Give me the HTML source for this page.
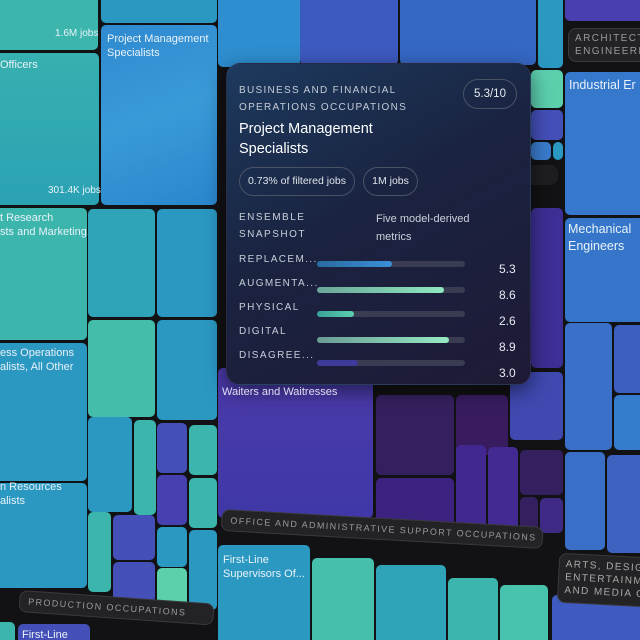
<!DOCTYPE html>
<html><head><meta charset="utf-8"><style>
*{margin:0;padding:0;box-sizing:border-box}
html{width:640px;height:640px;overflow:hidden}
body{width:640px;height:640px;overflow:hidden;background:#121214;font-family:"Liberation Sans",sans-serif;position:relative}
.r{position:absolute;border-radius:5px}
.t{position:absolute;color:#e8f2f8;font-size:11px;line-height:14px;white-space:nowrap}
.tc{background:#3cb6ad}.cy{background:#2b98c2}.bl{background:#3a7ccc}.in{background:#4450b8}.pu{background:#3f2a86}.dp{background:#35205f}.gr{background:#5ccfad}
.pill{position:absolute;border-radius:8px;background:#232325;border:1px solid #3a3a3c;color:#9a9a9e;font-size:9px;letter-spacing:1.4px;padding:4px 8px;line-height:12px;white-space:nowrap;overflow:hidden}
</style></head><body>
<!-- left column -->
<div class="r tc" style="left:-5px;top:-5px;width:103px;height:55px"></div>
<div class="t" style="left:55px;top:27px;font-size:10px">1.6M jobs</div>
<div class="r" style="left:-5px;top:53px;width:104px;height:152px;background:linear-gradient(#36b0b0,#2aa2b4)"></div>
<div class="t" style="left:0;top:58px">Officers</div>
<div class="t" style="left:48px;top:184px;font-size:10px">301.4K jobs</div>
<div class="r tc" style="left:-5px;top:208px;width:92px;height:132px"></div>
<div class="t" style="left:0;top:211px">t Research<br>sts and Marketing...</div>
<div class="r cy" style="left:-5px;top:343px;width:92px;height:138px"></div>
<div class="t" style="left:0;top:346px">ess Operations<br>alists, All Other</div>
<div class="r cy" style="left:-5px;top:483px;width:92px;height:105px"></div>
<div class="t" style="left:0;top:480px">n Resources<br>alists</div>
<div class="r tc" style="left:-5px;top:622px;width:20px;height:30px"></div>
<div class="r in" style="left:18px;top:624px;width:72px;height:30px"></div>
<div class="t" style="left:22px;top:628px">First-Line</div>
<!-- column 2 -->
<div class="r cy" style="left:101px;top:-5px;width:116px;height:28px"></div>
<div class="r" style="left:101px;top:25px;width:116px;height:180px;background:linear-gradient(160deg,#2f8ad0,#3a9ad8 50%,#2a86cc)"></div>
<div class="t" style="left:107px;top:32px">Project Management<br>Specialists</div>
<div class="r cy" style="left:88px;top:209px;width:67px;height:108px;background:#2fa3b8"></div>
<div class="r cy" style="left:157px;top:209px;width:60px;height:108px"></div>
<div class="r tc" style="left:88px;top:320px;width:67px;height:97px;background:#44bdab"></div>
<div class="r cy" style="left:157px;top:320px;width:60px;height:100px"></div>
<div class="r cy" style="left:88px;top:417px;width:44px;height:95px"></div>
<div class="r tc" style="left:134px;top:420px;width:22px;height:95px"></div>
<div class="r in" style="left:157px;top:423px;width:30px;height:50px"></div>
<div class="r tc" style="left:189px;top:425px;width:28px;height:50px"></div>
<div class="r pu" style="left:157px;top:475px;width:30px;height:50px;background:#4640b0"></div>
<div class="r tc" style="left:189px;top:478px;width:28px;height:50px"></div>
<div class="r tc" style="left:88px;top:512px;width:23px;height:80px"></div>
<div class="r in" style="left:113px;top:515px;width:42px;height:45px"></div>
<div class="r in" style="left:113px;top:562px;width:42px;height:40px"></div>
<div class="r cy" style="left:157px;top:527px;width:30px;height:40px"></div>
<div class="r gr" style="left:157px;top:568px;width:30px;height:40px"></div>
<div class="r cy" style="left:189px;top:530px;width:28px;height:80px"></div>
<div class="pill" style="left:20px;top:590px;width:195px;height:22px;transform:rotate(4deg);transform-origin:left top">PRODUCTION OCCUPATIONS</div>
<!-- middle column -->
<div class="r cy" style="left:218px;top:-5px;width:82px;height:72px;background:#2e8ed0"></div>
<div class="r in" style="left:300px;top:-5px;width:98px;height:70px;background:#3d5ac0"></div>
<div class="r bl" style="left:400px;top:-5px;width:136px;height:70px;background:#3568c4"></div>
<div class="r cy" style="left:538px;top:-5px;width:25px;height:73px"></div>
<div class="r gr" style="left:531px;top:70px;width:32px;height:38px"></div>
<div class="r in" style="left:531px;top:110px;width:32px;height:30px"></div>
<div class="r bl" style="left:531px;top:142px;width:20px;height:18px"></div>
<div class="r cy" style="left:553px;top:142px;width:10px;height:18px"></div>
<div class="r" style="left:500px;top:165px;width:58px;height:20px;background:#1e1e20;border-radius:8px"></div>
<div class="r pu" style="left:531px;top:208px;width:32px;height:160px;background:#3d2f95"></div>
<div class="r in" style="left:510px;top:372px;width:53px;height:68px;background:#3f49b0"></div>
<div class="r" style="left:218px;top:368px;width:155px;height:150px;background:linear-gradient(#4a3aa8,#4038a8)"></div>
<div class="r dp" style="left:376px;top:395px;width:78px;height:80px"></div>
<div class="r dp" style="left:456px;top:395px;width:52px;height:60px;background:#391c60"></div>
<div class="r pu" style="left:376px;top:478px;width:78px;height:55px;background:#3c2380"></div>
<div class="r pu" style="left:456px;top:445px;width:30px;height:95px;background:#412890"></div>
<div class="r pu" style="left:488px;top:447px;width:30px;height:95px;background:#432a92"></div>
<div class="r dp" style="left:520px;top:450px;width:43px;height:45px"></div>
<div class="r dp" style="left:520px;top:497px;width:18px;height:45px"></div>
<div class="r pu" style="left:540px;top:498px;width:23px;height:35px"></div>
<div class="r cy" style="left:218px;top:545px;width:92px;height:100px"></div>
<div class="t" style="left:223px;top:553px">First-Line<br>Supervisors Of...</div>
<div class="r tc" style="left:312px;top:558px;width:62px;height:90px;background:#46c0ad"></div>
<div class="r cy" style="left:376px;top:565px;width:70px;height:80px;background:#2fa3b8"></div>
<div class="r tc" style="left:448px;top:578px;width:50px;height:70px"></div>
<div class="r tc" style="left:500px;top:585px;width:48px;height:60px;background:#48c4ae"></div>
<div class="r in" style="left:552px;top:595px;width:90px;height:50px;background:#3f5ac0"></div>
<div class="pill" style="left:222px;top:509px;width:322px;height:22px;transform:rotate(3.2deg);transform-origin:left top">OFFICE AND ADMINISTRATIVE SUPPORT OCCUPATIONS</div>
<!-- right column -->
<div class="r in" style="left:565px;top:-5px;width:80px;height:26px;background:#4a3fb0"></div>
<div class="pill" style="left:568px;top:28px;width:80px;height:34px;font-size:10px;line-height:13px;padding:3px 6px">ARCHITECT<br>ENGINEERI</div>
<div class="r bl" style="left:565px;top:72px;width:80px;height:143px;background:#3578cc"></div>
<div class="t" style="left:569px;top:78px;font-size:12.5px">Industrial Er</div>
<div class="r bl" style="left:565px;top:218px;width:80px;height:104px;background:#3576ca"></div>
<div class="t" style="left:568px;top:221px;font-size:12.5px;line-height:17px">Mechanical<br>Engineers</div>
<div class="r bl" style="left:565px;top:323px;width:47px;height:127px;background:#3a70c8"></div>
<div class="r in" style="left:614px;top:325px;width:30px;height:68px;background:#3d60c0"></div>
<div class="r bl" style="left:614px;top:395px;width:30px;height:55px;background:#357dcc"></div>
<div class="r bl" style="left:565px;top:452px;width:40px;height:98px;background:#3a6fc8"></div>
<div class="r in" style="left:607px;top:455px;width:38px;height:98px;background:#3d62c0"></div>
<div class="pill" style="left:558px;top:555px;width:90px;height:50px;font-size:10px;line-height:13px;padding:4px 6px;color:#aaa;transform:rotate(3deg)">ARTS, DESIG<br>ENTERTAINM<br>AND MEDIA O</div>
<!-- tooltip -->
<div style="position:absolute;left:226px;top:63px;width:305px;height:322px;border-radius:14px;background:linear-gradient(150deg,#1d3a5e 0%,#1a2340 45%,#1e1a36 100%);box-shadow:0 6px 20px rgba(0,0,0,.5);border:1px solid rgba(255,255,255,.06)">
 <div style="position:absolute;left:12px;top:18px;font-size:10px;letter-spacing:1.3px;color:#c4cbd6;line-height:17px;white-space:nowrap">BUSINESS AND FINANCIAL<br>OPERATIONS OCCUPATIONS</div>
 <div style="position:absolute;left:236px;top:15px;width:54px;height:30px;border:1px solid #4a5266;border-radius:15px;color:#e6eaf0;font-size:11.5px;text-align:center;line-height:28px">5.3/10</div>
 <div style="position:absolute;left:12px;top:55px;font-size:14.5px;color:#fff;line-height:20px;white-space:nowrap">Project Management<br>Specialists</div>
 <div style="position:absolute;left:12px;top:103px;height:29px;width:116px;border:1px solid #4a5266;border-radius:15px;color:#dfe4ea;font-size:10.5px;line-height:27px;text-align:center;white-space:nowrap">0.73% of filtered jobs</div>
 <div style="position:absolute;left:136px;top:103px;height:29px;width:55px;border:1px solid #4a5266;border-radius:15px;color:#dfe4ea;font-size:10.5px;line-height:27px;text-align:center;white-space:nowrap">1M jobs</div>
 <div style="position:absolute;left:12px;top:145px;font-size:10px;letter-spacing:1.5px;color:#c8ced8;line-height:17px">ENSEMBLE<br>SNAPSHOT</div>
 <div style="position:absolute;left:149px;top:146px;font-size:11px;color:#ccd2dc;line-height:18px;white-space:nowrap">Five model-derived<br>metrics</div>
 <div style="position:absolute;left:12px;top:184px;font-size:10px;letter-spacing:1.4px;color:#c8ced8;line-height:24px;white-space:nowrap">REPLACEM...<br>AUGMENTA...<br>PHYSICAL<br>DIGITAL<br>DISAGREE...</div>
 <div style="position:absolute;left:90px;top:197px;width:148px;height:6px;border-radius:3px;background:#3a3c52"><div style="width:51%;height:100%;border-radius:3px;background:linear-gradient(90deg,#2a6aa0,#3a90d8)"></div></div>
 <div style="position:absolute;left:90px;top:223px;width:148px;height:6px;border-radius:3px;background:#3a3c52"><div style="width:86%;height:100%;border-radius:3px;background:linear-gradient(90deg,#6aa698,#8ee8c0)"></div></div>
 <div style="position:absolute;left:90px;top:247px;width:148px;height:6px;border-radius:3px;background:#3a3c52"><div style="width:25%;height:100%;border-radius:3px;background:linear-gradient(90deg,#3aa098,#5ad0b0)"></div></div>
 <div style="position:absolute;left:90px;top:273px;width:148px;height:6px;border-radius:3px;background:#3a3c52"><div style="width:89%;height:100%;border-radius:3px;background:linear-gradient(90deg,#6a9c94,#96eac4)"></div></div>
 <div style="position:absolute;left:90px;top:296px;width:148px;height:6px;border-radius:3px;background:#3a3c52"><div style="width:28%;height:100%;border-radius:3px;background:#3e3a9a"></div></div>
 <div style="position:absolute;left:272px;top:192px;font-size:12px;color:#e6eaf0;line-height:26px">5.3<br>8.6<br>2.6<br>8.9<br>3.0</div>
</div>
<div class="t" style="left:222px;top:385px;color:#e2dcf4">Waiters and Waitresses</div>
</body></html>
